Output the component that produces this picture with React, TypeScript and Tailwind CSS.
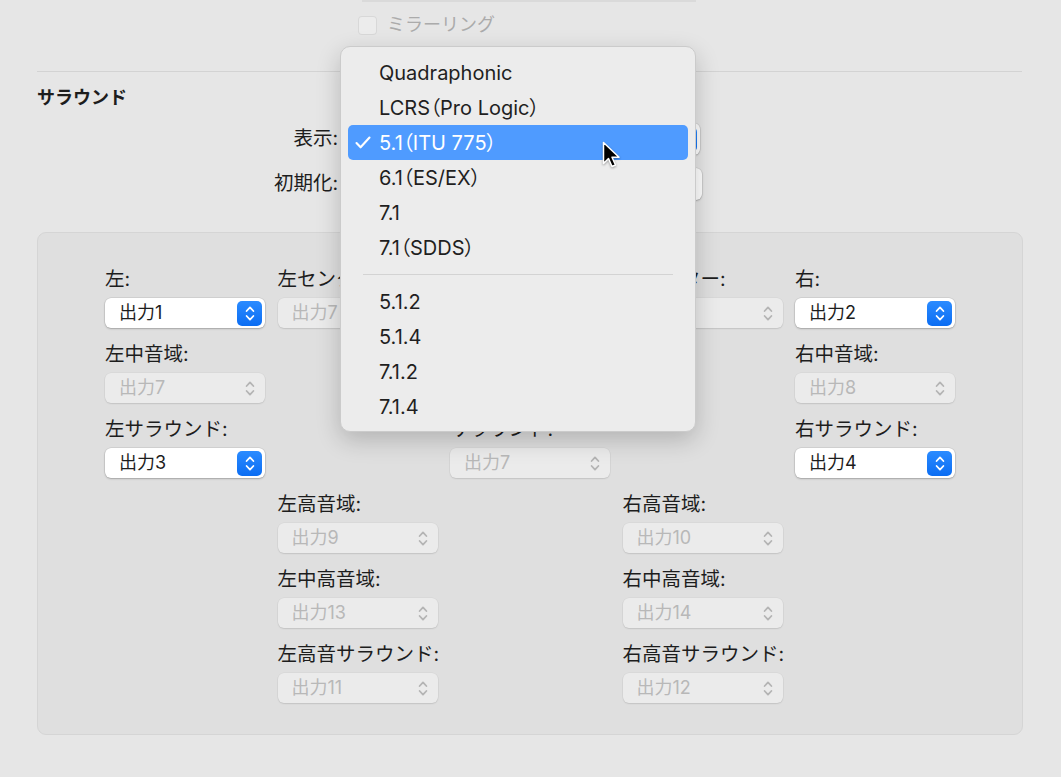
import React from "react";

function Chevrons({ color }: { color: string }) {
  return (
    <svg width="10" height="17" viewBox="0 0 10 17" fill="none" stroke={color} strokeWidth="1.8" strokeLinecap="round" strokeLinejoin="round">
      <path d="M1.6 6 L5 2.4 L8.4 6" />
      <path d="M1.6 11 L5 14.6 L8.4 11" />
    </svg>
  );
}

function Popup({ value, enabled, w = "w-[160px]", h = "h-[31px]" }: { value: string; enabled?: boolean; w?: string; h?: string }) {
  if (enabled) {
    return (
      <div className={`${h} ${w} rounded-[6px] bg-white shadow-[0_0_0_0.5px_rgba(0,0,0,0.12),0_1px_2px_rgba(0,0,0,0.22)] flex items-center pl-[14px] pr-[3px]`}>
        <span className="flex-1 text-[18px] leading-none text-[#1d1d1d]">{value}</span>
        <div className="w-[25px] h-[25px] rounded-[5px] bg-gradient-to-b from-[#2a8bff] to-[#0a6df3] flex items-center justify-center">
          <Chevrons color="#ffffff" />
        </div>
      </div>
    );
  }
  return (
    <div className={`${h} ${w} rounded-[6px] bg-[#ebebeb] shadow-[0_0_0_0.5px_rgba(0,0,0,0.05),0_1px_1.5px_rgba(0,0,0,0.1)] flex items-center pl-[14px] pr-[10px]`}>
      <span className="flex-1 text-[18px] leading-none text-[#b8b8b8]">{value}</span>
      <Chevrons color="#b4b4b4" />
    </div>
  );
}

function Cell({ label, value, enabled, pos }: { label: string; value: string; enabled?: boolean; pos: string }) {
  return (
    <div className={`${pos} flex flex-col`}>
      <div className="h-[24px] leading-[24px] text-[19.5px] text-[#1d1d1d] whitespace-nowrap">{label}</div>
      <div className="mt-[7px]">
        <Popup value={value} enabled={enabled} h="h-[30px]" />
      </div>
    </div>
  );
}

const menuTop = ["Quadraphonic", "LCRS（Pro Logic）", "5.1（ITU 775）", "6.1（ES/EX）", "7.1", "7.1（SDDS）"];
const menuBottom = ["5.1.2", "5.1.4", "7.1.2", "7.1.4"];

function MenuItem({ text, selected }: { text: string; selected?: boolean }) {
  return (
    <div className={`h-[35px] flex items-center rounded-[5px] relative pl-[31px] ${selected ? "bg-[#4f9bff] text-white" : "text-[#1f1f1f]"}`}>
      {selected && (
        <svg className="absolute left-[7px] top-[11px]" width="16" height="13" viewBox="0 0 16 13" fill="none" stroke="#ffffff" strokeWidth="2.1" strokeLinecap="round" strokeLinejoin="round">
          <path d="M1.5 7 L5.6 11.3 L14.5 1.5" />
        </svg>
      )}
      <span className="leading-none">{text}</span>
    </div>
  );
}

export default function App() {
  return (
    <div className="w-[1061px] h-[777px] bg-[#e6e6e6] relative overflow-hidden font-['Inter','Noto_Sans_CJK_JP',sans-serif] text-[#1d1d1d]">
      <div className="ml-[362px] w-[334px] h-[2px] bg-[#dadada]" />
      <div className="flex items-center ml-[358px] mt-[13px] h-[20px] gap-[10px]">
        <div className="w-[19px] h-[19px] rounded-[4px] bg-[#ececec] shadow-[inset_0_0_0_1px_#d8d8d8]" />
        <span className="text-[18px] leading-none text-[#ababab]">ミラーリング</span>
      </div>
      <div className="ml-[37px] mr-[39px] mt-[36px] h-px bg-[#d3d3d3]" />
      <div className="ml-[37px] mt-[14px] h-[24px] leading-[24px] text-[18px] font-bold">サラウンド</div>
      <div className="flex items-center mt-[13px] h-[32px]">
        <div className="w-[338px] text-right text-[19.5px] leading-none">表示:</div>
        <div className="ml-[8px]">
          <Popup value="" enabled w="w-[354px]" h="h-[32px]" />
        </div>
      </div>
      <div className="flex items-center mt-[13px] h-[32px]">
        <div className="w-[338px] text-right text-[19.5px] leading-none">初期化:</div>
        <div className="ml-[8px] h-[32px] w-[356px] rounded-[6px] bg-white shadow-[0_0_0_0.5px_rgba(0,0,0,0.12),0_1px_2px_rgba(0,0,0,0.22)]" />
      </div>
      <div className="ml-[37px] mr-[38px] mt-[32px] h-[503px] rounded-[9px] bg-[#dfdfdf] border border-[#d5d5d5] pl-[67px] pt-[34px]">
        <div className="grid grid-cols-[160px_160px_160px_160px_160px] gap-x-[12.5px] gap-y-[14px]">
          <Cell pos="col-start-1 row-start-1" label="左:" value="出力1" enabled />
          <Cell pos="col-start-2 row-start-1" label="左センター:" value="出力7" />
          <Cell pos="col-start-3 row-start-1" label="センター:" value="出力5" />
          <Cell pos="col-start-4 row-start-1" label="右センター:" value="出力8" />
          <Cell pos="col-start-5 row-start-1" label="右:" value="出力2" enabled />
          <Cell pos="col-start-1 row-start-2" label="左中音域:" value="出力7" />
          <Cell pos="col-start-3 row-start-2" label="LFE:" value="出力6" />
          <Cell pos="col-start-5 row-start-2" label="右中音域:" value="出力8" />
          <Cell pos="col-start-1 row-start-3" label="左サラウンド:" value="出力3" enabled />
          <Cell pos="col-start-3 row-start-3" label="サラウンド:" value="出力7" />
          <Cell pos="col-start-5 row-start-3" label="右サラウンド:" value="出力4" enabled />
          <Cell pos="col-start-2 row-start-4" label="左高音域:" value="出力9" />
          <Cell pos="col-start-4 row-start-4" label="右高音域:" value="出力10" />
          <Cell pos="col-start-2 row-start-5" label="左中高音域:" value="出力13" />
          <Cell pos="col-start-4 row-start-5" label="右中高音域:" value="出力14" />
          <Cell pos="col-start-2 row-start-6" label="左高音サラウンド:" value="出力11" />
          <Cell pos="col-start-4 row-start-6" label="右高音サラウンド:" value="出力12" />
        </div>
      </div>

      <div className="absolute left-[340px] top-[46px] w-[356px] h-[386px] rounded-[10px] bg-[#ececec] border border-[#cbcbcb] shadow-[0_8px_24px_rgba(0,0,0,0.2)] pt-[8px] px-[7px] text-[20px] [font-feature-settings:'palt']">
        {menuTop.map((t) => (
          <MenuItem key={t} text={t} selected={t === "5.1（ITU 775）"} />
        ))}
        <div className="h-[19px] flex items-center mx-[15px]">
          <div className="h-px w-full bg-[#d3d3d3]" />
        </div>
        {menuBottom.map((t) => (
          <MenuItem key={t} text={t} />
        ))}
      </div>

      <svg className="absolute left-[602px] top-[141px] drop-shadow-[0_1px_1px_rgba(0,0,0,0.35)]" width="20" height="29" viewBox="0 0 20 29">
        <path d="M1.5 1.5 L1.5 22.5 L6.5 17.5 L10 25.5 L13.5 24 L10 16.3 L17 16.3 Z" fill="#000" stroke="#fff" strokeWidth="1.5" strokeLinejoin="round" />
      </svg>
    </div>
  );
}
